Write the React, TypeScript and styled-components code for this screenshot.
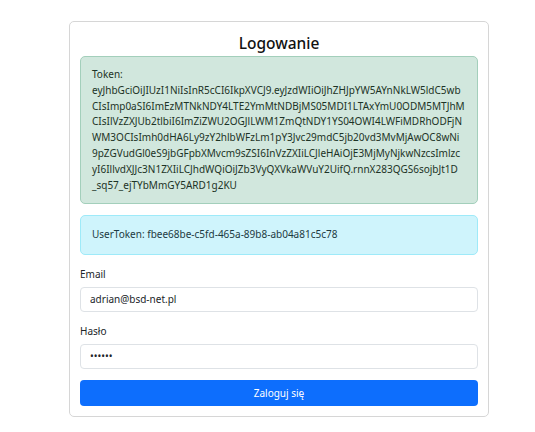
import React from 'react';
import styled, { createGlobalStyle } from 'styled-components';

// the JWT exactly as it wraps in the alert
const tokenLines = [
  'eyJhbGciOiJIUzI1NiIsInR5cCI6IkpXVCJ9.eyJzdWIiOiJhZHJpYW5AYnNkLW5ldC5wb',
  'CIsImp0aSI6ImEzMTNkNDY4LTE2YmMtNDBjMS05MDI1LTAxYmU0ODM5MTJhM',
  'CIsIlVzZXJUb2tlbiI6ImZiZWU2OGJlLWM1ZmQtNDY1YS04OWI4LWFiMDRhODFjN',
  'WM3OCIsImh0dHA6Ly9zY2hlbWFzLm1pY3Jvc29mdC5jb20vd3MvMjAwOC8wNi',
  '9pZGVudGl0eS9jbGFpbXMvcm9sZSI6InVzZXIiLCJleHAiOjE3MjMyNjkwNzcsImlzc',
  'yI6IllvdXJJc3N1ZXIiLCJhdWQiOiJZb3VyQXVkaWVuY2UifQ.rnnX283QGS6sojbJt1D',
  '_sq57_ejTYbMmGY5ARD1g2KU',
];

const userToken = 'fbee68be-c5fd-465a-89b8-ab04a81c5c78';

const App = () => {
  return (
    <>
      <GlobalStyle />
      <Page>
        <Card>
          <Title>Logowanie</Title>
          <Alert variant="success">
            Token:
            {tokenLines.map((line) => (
              <TokenLine key={line}>{line}</TokenLine>
            ))}
          </Alert>
          <Alert variant="info">UserToken: {userToken}</Alert>
          <Field>
            <Label htmlFor="email">Email</Label>
            <Input id="email" type="email" defaultValue="adrian@bsd-net.pl" />
          </Field>
          <Field>
            <Label htmlFor="password">Hasło</Label>
            <Input id="password" type="password" defaultValue="secret" />
          </Field>
          <Button type="button">Zaloguj się</Button>
        </Card>
      </Page>
    </>
  );
};

export default App;

const GlobalStyle = createGlobalStyle`
  body {
    margin: 0;
    background: #fff;
    font-family: "Noto Sans", "Open Sans", sans-serif;
    color: #212529;
  }
`;

const Page = styled.div`
  padding: 21px 0 0 69px;
`;

const Card = styled.div`
  width: 420px;
  box-sizing: border-box;
  border: 1px solid #d6d6d6;
  border-radius: 5px;
  padding: 10px;
  display: flex;
  flex-direction: column;
`;

const Title = styled.h3`
  margin: 0 0 2px;
  text-align: center;
  font-size: 15.5px;
  line-height: 22px;
  font-weight: 500;
  color: #111;
`;

const alertColors = {
  success: { bg: '#d1e7dd', border: '#a3cfbb', text: '#1c3326' },
  info: { bg: '#cff4fc', border: '#9eeaf9', text: '#1d3a42' },
};

const Alert = styled.div<{ variant: 'success' | 'info' }>`
  box-sizing: border-box;
  margin-bottom: 11px;
  padding: ${(p) => (p.variant === 'info' ? '10.5px 11px 11px' : '10px 11px')};
  border: 1px solid ${(p) => alertColors[p.variant].border};
  border-radius: 5px;
  background: ${(p) => alertColors[p.variant].bg};
  color: ${(p) => alertColors[p.variant].text};
  font-size: 10px;
  line-height: 15.8px;
`;

const TokenLine = styled.div`
  white-space: nowrap;
`;

const Field = styled.div`
  display: flex;
  flex-direction: column;
  margin-bottom: 11px;
`;

const Label = styled.label`
  font-size: 10px;
  line-height: 16px;
  margin-bottom: 5px;
  color: #212529;
`;

const Input = styled.input`
  box-sizing: border-box;
  height: 25px;
  padding: 0 9px;
  border: 1px solid #dee2e6;
  border-radius: 4px;
  font-family: inherit;
  font-size: 10px;
  color: #212529;
  outline: none;
`;

const Button = styled.button`
  height: 26px;
  border: 0;
  border-radius: 4px;
  background: #0d6efd;
  color: #fff;
  font-family: inherit;
  font-size: 10px;
  cursor: pointer;
`;
